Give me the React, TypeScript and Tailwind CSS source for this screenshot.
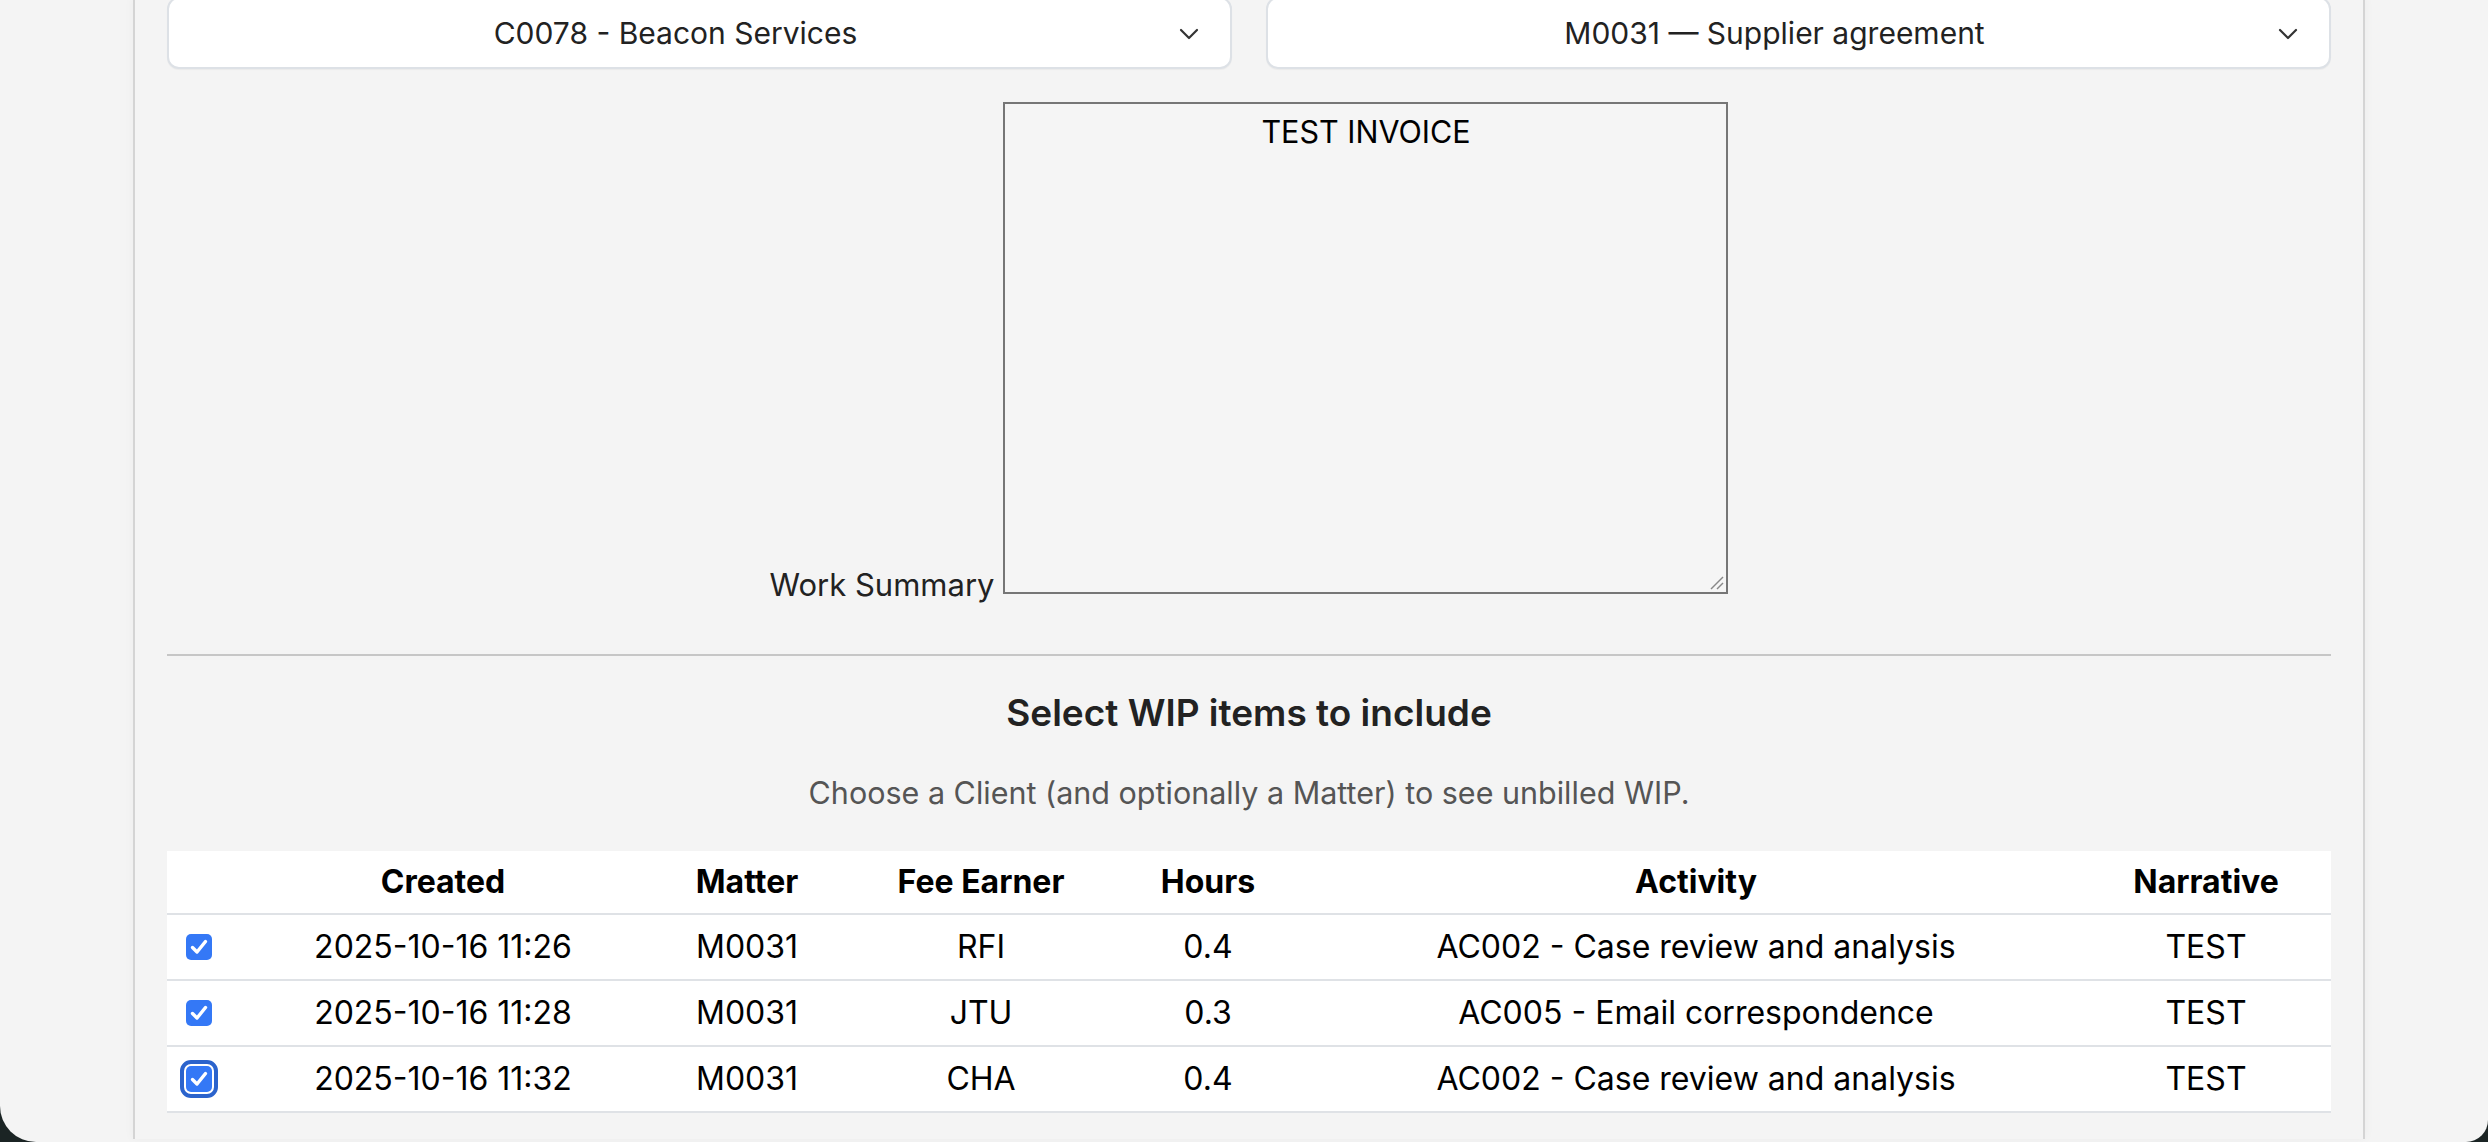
import React from "react";

const font = { fontFamily: 'Inter, "Noto Sans", "Liberation Sans", sans-serif' };

function Chevron() {
  return (
    <svg width="20" height="12" viewBox="0 0 20 12" className="shrink-0">
      <polyline points="2,2 10,10 18,2" fill="none" stroke="#333" strokeWidth="2.2" strokeLinecap="round" strokeLinejoin="round" />
    </svg>
  );
}

function SelectBox({ label }: { label: string }) {
  return (
    <div className="relative flex-1 h-[72px] bg-white border-2 border-[#dde1e6] rounded-[12px] shadow-[0_1px_1px_rgba(0,0,0,0.04)] flex items-center pl-[16px] pr-[64px]">
      <div className="flex-1 text-center text-[30px] text-[#222]">{label}</div>
      <div className="absolute right-[31px] top-[29px]">
        <Chevron />
      </div>
    </div>
  );
}

function Check({ focus }: { focus?: boolean }) {
  return (
    <div
      className={
        "w-[26px] h-[26px] rounded-[5px] bg-[#3478f6] flex items-center justify-center " +
        (focus ? "outline-[4px] outline-solid outline-[#2b63cc] outline-offset-[2px]" : "")
      }
    >
      <svg width="22" height="22" viewBox="0 0 22 22">
        <polyline points="4.5,11.5 9,16 17.5,5.5" fill="none" stroke="#fff" strokeWidth="3.4" strokeLinecap="round" strokeLinejoin="round" />
      </svg>
    </div>
  );
}

const rows = [
  { created: "2025-10-16 11:26", matter: "M0031", fee: "RFI", hours: "0.4", activity: "AC002 - Case review and analysis", narrative: "TEST" },
  { created: "2025-10-16 11:28", matter: "M0031", fee: "JTU", hours: "0.3", activity: "AC005 - Email correspondence", narrative: "TEST" },
  { created: "2025-10-16 11:32", matter: "M0031", fee: "CHA", hours: "0.4", activity: "AC002 - Case review and analysis", narrative: "TEST" },
];

const grid = "grid grid-cols-[82px_388px_220px_248px_206px_770px_1fr] items-center";

export default function App() {
  return (
    <div className="w-full h-[1142px] bg-[#1b2424] overflow-hidden" style={font}>
      <div className="h-full bg-[#f4f4f4] rounded-bl-[36px] rounded-br-[22px] overflow-hidden">
        <div className="ml-[133px] w-[2232px] h-full border-x-2 border-[#d4d4d4] px-[32px] shadow-[0_0_10px_rgba(0,0,0,0.04)]">
          {/* selects */}
          <div className="flex gap-[34px] -mt-[3px]">
            <SelectBox label="C0078 - Beacon Services" />
            <SelectBox label="M0031 — Supplier agreement" />
          </div>

          {/* work summary */}
          <div className="mt-[33px] flex justify-center items-end gap-[9px]">
            <label className="text-[31px] leading-[32px] text-[#222] -mb-[7px]">Work Summary</label>
            <div className="relative w-[725px] h-[492px] border-2 border-[#767676] bg-[#f5f5f5] pt-[10px] text-center text-[30.5px] leading-[36px] text-black">
              TEST INVOICE
              <svg className="absolute right-[2px] bottom-[2px]" width="14" height="14" viewBox="0 0 14 14">
                <line x1="1" y1="13" x2="13" y2="1" stroke="#888" strokeWidth="1.4" />
                <line x1="7" y1="13" x2="13" y2="7" stroke="#888" strokeWidth="1.4" />
              </svg>
            </div>
          </div>

          {/* divider */}
          <div className="mt-[60px] h-[2px] bg-[#c6c6c6]" />

          {/* heading */}
          <div className="mt-[33px] text-center text-[37px] leading-[48px] font-semibold text-[#222]">Select WIP items to include</div>
          <div className="mt-[36px] text-center text-[30.5px] leading-[40px] text-[#555]">Choose a Client (and optionally a Matter) to see unbilled WIP.</div>

          {/* table */}
          <div className="mt-[38px] bg-white text-[32px] text-black">
            <div className={grid + " h-[64px] border-b-2 border-[#dfe2e6] font-bold"}>
              <div />
              <div className="text-center">Created</div>
              <div className="text-center">Matter</div>
              <div className="text-center">Fee Earner</div>
              <div className="text-center">Hours</div>
              <div className="text-center">Activity</div>
              <div className="text-center">Narrative</div>
            </div>
            {rows.map((r, i) => (
              <div key={i} className={grid + " h-[66px] border-b-2 border-[#dfe2e6]"}>
                <div className="pl-[19px]">
                  <Check focus={i === 2} />
                </div>
                <div className="text-center">{r.created}</div>
                <div className="text-center">{r.matter}</div>
                <div className="text-center">{r.fee}</div>
                <div className="text-center">{r.hours}</div>
                <div className="text-center">{r.activity}</div>
                <div className="text-center">{r.narrative}</div>
              </div>
            ))}
          </div>
        </div>
      </div>
    </div>
  );
}
